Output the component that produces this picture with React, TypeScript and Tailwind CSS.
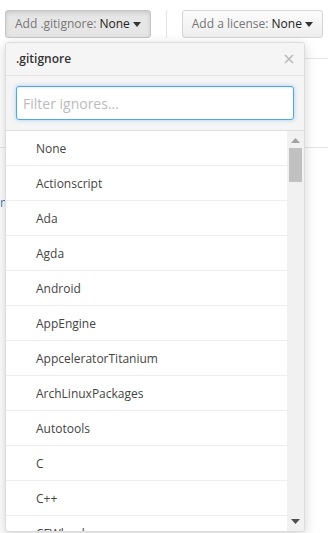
import React from "react";

const items = [
  "None",
  "Actionscript",
  "Ada",
  "Agda",
  "Android",
  "AppEngine",
  "AppceleratorTitanium",
  "ArchLinuxPackages",
  "Autotools",
  "C",
  "C++",
  "CFWheels",
];

function Caret() {
  return (
    <svg width="8" height="5" viewBox="0 0 8 5" className="ml-[3px] mt-[1px]">
      <path d="M0 0h8L4 5z" fill="#333" />
    </svg>
  );
}

export default function App() {
  return (
    <div
      className="relative w-[328px] h-[533px] overflow-hidden bg-white"
      style={{ fontFamily: '"Open Sans", "Noto Sans", sans-serif' }}
    >
      {/* background page */}
      <div className="flex items-center pt-[10px] pl-[5px]">
        <div className="flex h-[28px] items-center rounded-[3px] border border-[#c5c5c5] bg-[#e6e6e6] px-[9px] text-[12px] shadow-[inset_0_2px_4px_rgba(0,0,0,0.12)]">
          <span className="text-[#767676]">Add .gitignore:&nbsp;</span>
          <span className="text-[#222]">None</span>
          <Caret />
        </div>
        <div className="mx-[15px] h-[28px] w-px bg-[#e5e5e5]" />
        <div className="flex h-[28px] items-center rounded-[3px] border border-[#d5d5d5] bg-gradient-to-b from-[#fcfcfc] to-[#eeeeee] px-[9px] text-[12px]">
          <span className="text-[#767676]">Add a license:&nbsp;</span>
          <span className="text-[#222]">None</span>
          <Caret />
        </div>
      </div>
      <div className="mt-[20px] ml-[300px] h-px bg-[#e5e5e5]" />
      <div className="mt-[17px] ml-[5px] h-[34px] w-[2px] bg-[#6cc644]" />
      <div className="mt-[37px] h-px bg-[#e5e5e5]" />
      <div className="mt-[48px] text-[12px] leading-[14px] text-[#4078c0]">m</div>

      {/* popover */}
      <div className="absolute left-[5px] top-[42px] flex h-[490px] w-[300px] flex-col overflow-hidden rounded-[3px] border border-[#dcdcdc] bg-white shadow-[0_3px_12px_rgba(0,0,0,0.18)]">
        <div className="flex h-[33px] shrink-0 items-center justify-between border-b border-[#e5e5e5] bg-[#f5f5f5] pl-[10px] pr-[10px]">
          <span className="text-[12px] font-semibold text-[#333]">.gitignore</span>
          <svg width="10" height="10" viewBox="0 0 10 10">
            <path d="M1 1l8 8M9 1l-8 8" stroke="#bbb" strokeWidth="1.6" />
          </svg>
        </div>
        <div className="shrink-0 border-b border-[#dddddd] bg-[#f5f5f5] p-[10px]">
          <div className="flex h-[34px] items-center rounded-[3px] border border-[#51a7e8] bg-white px-[6px] text-[14px] text-[#bbbbbb] shadow-[inset_0_1px_2px_rgba(0,0,0,0.075),0_0_4px_rgba(81,167,232,0.5)]">
            Filter ignores...
          </div>
        </div>
        <div className="flex min-h-0 flex-1">
          <div className="flex-1 overflow-hidden">
            {items.map((it) => (
              <div
                key={it}
                className="flex h-[35px] items-center border-b border-[#eeeeee] pl-[30px] pt-[2px] text-[12px] text-[#444]"
              >
                {it}
              </div>
            ))}
          </div>
          <div className="flex w-[17px] shrink-0 flex-col items-center bg-[#f1f1f1]">
            <svg width="9" height="5" viewBox="0 0 9 5" className="mt-[7px]">
              <path d="M0 5h9L4.5 0z" fill="#a3a3a3" />
            </svg>
            <div className="mt-[5px] h-[34px] w-[13px] bg-[#c1c1c1]" />
            <div className="flex-1" />
            <svg width="9" height="5" viewBox="0 0 9 5" className="mb-[7px]">
              <path d="M0 0h9L4.5 5z" fill="#505050" />
            </svg>
          </div>
        </div>
      </div>
    </div>
  );
}
